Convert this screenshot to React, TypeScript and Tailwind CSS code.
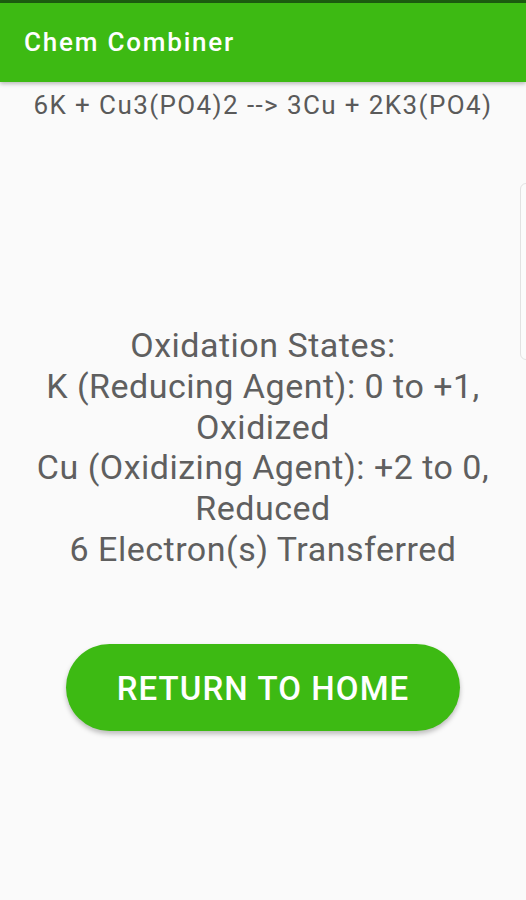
import React from "react";

const font = { fontFamily: "Roboto, 'Noto Sans', sans-serif" };

function Header() {
  return (
    <div className="w-full">
      <div className="h-[3px] bg-[#1c5d10]" />
      <div className="h-[79px] bg-[#3dba13] flex items-center pl-[24px] shadow-[0_2px_4px_rgba(0,0,0,0.25)]">
        <h1 className="text-white text-[26px] font-medium tracking-[1.8px]">Chem Combiner</h1>
      </div>
    </div>
  );
}

export default function App() {
  const lines = [
    "Oxidation States:",
    "K (Reducing Agent): 0 to +1,",
    "Oxidized",
    "Cu (Oxidizing Agent): +2 to 0,",
    "Reduced",
    "6 Electron(s) Transferred",
  ];

  return (
    <div className="relative w-[526px] h-[900px] bg-[#fafafa] overflow-hidden" style={font}>
      <Header />

      <p className="text-center text-[26px] leading-[30px] tracking-[1.4px] text-[#5a5a5a] mt-[8px]">
        6K + Cu3(PO4)2 --&gt; 3Cu + 2K3(PO4)
      </p>

      <div className="mt-[205px] flex flex-col items-center text-[#5f5f5f] text-[34px] leading-[40.8px] tracking-[0.5px]">
        {lines.map((l) => (
          <p key={l}>{l}</p>
        ))}
      </div>

      <div className="flex justify-center mt-[74px]">
        <button className="w-[394px] h-[87px] pt-[2px] rounded-full bg-[#3dba13] text-white text-[33px] font-medium tracking-[1.1px] shadow-[0_3px_5px_rgba(0,0,0,0.25)]">
          RETURN TO HOME
        </button>
      </div>

      {/* scroll hint on right edge */}
      <div className="absolute right-[-8px] top-[183px] w-[14px] h-[177px] rounded-[6px] border border-[#e2e2e2] bg-[#fbfbfb]" />
    </div>
  );
}
